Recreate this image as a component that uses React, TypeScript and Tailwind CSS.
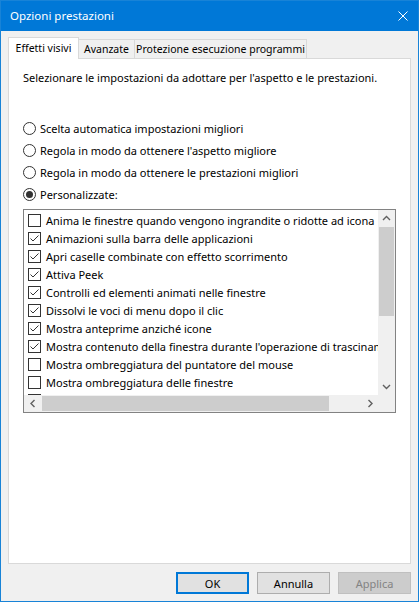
import React from 'react';

/* Opzioni prestazioni - Windows 10 style dialog */

const items: { label: string; checked: boolean }[] = [
  { label: 'Anima le finestre quando vengono ingrandite o ridotte ad icona', checked: false },
  { label: 'Animazioni sulla barra delle applicazioni', checked: true },
  { label: 'Apri caselle combinate con effetto scorrimento', checked: true },
  { label: 'Attiva Peek', checked: true },
  { label: 'Controlli ed elementi animati nelle finestre', checked: true },
  { label: 'Dissolvi le voci di menu dopo il clic', checked: true },
  { label: 'Mostra anteprime anziché icone', checked: true },
  { label: "Mostra contenuto della finestra durante l'operazione di trascinamento", checked: true },
  { label: 'Mostra ombreggiatura del puntatore del mouse', checked: false },
  { label: 'Mostra ombreggiatura delle finestre', checked: false },
  { label: 'Mostra rettangolo di selezione traslucido', checked: true },
];

const radios = [
  { label: 'Scelta automatica impostazioni migliori', checked: false },
  { label: "Regola in modo da ottenere l'aspetto migliore", checked: false },
  { label: 'Regola in modo da ottenere le prestazioni migliori', checked: false },
  { label: 'Personalizzate:', checked: true },
];

const Radio = ({ checked }: { checked: boolean }) => (
  <svg width="13" height="13" viewBox="0 0 13 13" className="shrink-0">
    <circle cx="6.5" cy="6.5" r="6" fill="#fff" stroke="#333" strokeWidth="1" />
    {checked && <circle cx="6.5" cy="6.5" r="3.5" fill="#333" />}
  </svg>
);

const Check = ({ checked }: { checked: boolean }) => (
  <svg width="13" height="13" viewBox="0 0 13 13" className="shrink-0">
    <rect x="0.5" y="0.5" width="12" height="12" fill="#fff" stroke="#333" strokeWidth="1" />
    {checked && <polyline points="2.5,6.5 5,9 10.5,3.5" fill="none" stroke="#333" strokeWidth="1" />}
  </svg>
);

const Chevron = ({ dir }: { dir: 'up' | 'down' | 'left' | 'right' }) => {
  const pts = {
    up: '1,5 4.5,1.5 8,5',
    down: '1,2 4.5,5.5 8,2',
    left: '5.5,1 2,4.5 5.5,8',
    right: '2.5,1 6,4.5 2.5,8',
  }[dir];
  const vertical = dir === 'up' || dir === 'down';
  return (
    <svg width={vertical ? 9 : 8} height={vertical ? 7 : 9} viewBox={vertical ? '0 0 9 7' : '0 0 8 9'}>
      <polyline points={pts} fill="none" stroke="#606060" strokeWidth="1.4" />
    </svg>
  );
};

export default function App() {
  return (
    <div
      className="w-[419px] h-[602px] flex flex-col border border-[#1883d7] bg-[#f0f0f0] text-black text-[11px] overflow-hidden"
      style={{ fontFamily: '"Noto Sans", "Open Sans", sans-serif' }}
    >
      {/* Title bar */}
      <div className="h-[30px] shrink-0 bg-[#0078d7] flex items-center justify-between pl-[9px] pr-[10px] text-white">
        <span className="text-[11.5px] leading-none">Opzioni prestazioni</span>
        <svg width="10" height="10" viewBox="0 0 10 10">
          <path d="M0.5 0.5 L9.5 9.5 M9.5 0.5 L0.5 9.5" stroke="#fff" strokeWidth="1" />
        </svg>
      </div>

      {/* Body */}
      <div className="flex-1 flex flex-col px-[7px] pt-[6px] pb-[7px]">
        {/* Tabs */}
        <div className="h-[21px] flex items-end relative z-10 shrink-0 whitespace-nowrap text-[10.5px]">
          <div className="w-[71px] h-[22px] -mb-px bg-white border border-b-0 border-[#d9d9d9] flex items-center justify-center leading-none">
            Effetti visivi
          </div>
          <div className="w-[56px] h-[19px] border-t border-r border-[#d9d9d9] flex items-center justify-center leading-none">
            Avanzate
          </div>
          <div className="w-[172px] h-[19px] border-t border-r border-[#d9d9d9] flex items-center justify-center leading-none">
            Protezione esecuzione programmi
          </div>
        </div>

        {/* Panel */}
        <div className="flex-1 bg-white border border-[#d9d9d9] px-[14px] pt-[11px] flex flex-col">
          <p className="leading-[16px] whitespace-nowrap">Selezionare le impostazioni da adottare per l'aspetto e le prestazioni.</p>

          <div className="mt-[31px] flex flex-col">
            {radios.map((r) => (
              <div key={r.label} className="h-[22px] flex items-center gap-[4px]">
                <Radio checked={r.checked} />
                <span className="leading-none">{r.label}</span>
              </div>
            ))}
          </div>

          {/* List box */}
          <div className="mt-[4px] h-[204px] border border-[#828282] grid grid-cols-[minmax(0,1fr)_17px] grid-rows-[minmax(0,1fr)_17px]">
            <div className="overflow-hidden pt-[1px] pl-[4px]">
              {items.map((it) => (
                <div key={it.label} className="h-[18px] flex items-center gap-[5px] whitespace-nowrap">
                  <Check checked={it.checked} />
                  <span className="leading-none">{it.label}</span>
                </div>
              ))}
            </div>
            {/* Vertical scrollbar */}
            <div className="bg-[#f0f0f0] flex flex-col">
              <div className="h-[17px] flex items-center justify-center">
                <Chevron dir="up" />
              </div>
              <div className="flex-1 px-[1px]">
                <div className="h-[89px] bg-[#cdcdcd]" />
              </div>
              <div className="h-[17px] flex items-center justify-center">
                <Chevron dir="down" />
              </div>
            </div>
            {/* Horizontal scrollbar */}
            <div className="bg-[#f0f0f0] flex">
              <div className="w-[17px] flex items-center justify-center">
                <Chevron dir="left" />
              </div>
              <div className="flex-1 py-[1px] pl-[1px]">
                <div className="w-[287px] h-full bg-[#cdcdcd]" />
              </div>
              <div className="w-[17px] flex items-center justify-center">
                <Chevron dir="right" />
              </div>
            </div>
            <div className="bg-[#f0f0f0]" />
          </div>
        </div>

        {/* Buttons */}
        <div className="mt-[8px] h-[22px] flex justify-end gap-[8px] shrink-0">
          <button className="w-[73px] h-[22px] bg-[#e1e1e1] border-2 border-[#0078d7] leading-none">OK</button>
          <button className="w-[73px] h-[22px] bg-[#e1e1e1] border border-[#adadad] leading-none">Annulla</button>
          <button className="w-[73px] h-[22px] bg-[#cccccc] border border-[#bfbfbf] text-[#838383] leading-none">Applica</button>
        </div>
      </div>
    </div>
  );
}
